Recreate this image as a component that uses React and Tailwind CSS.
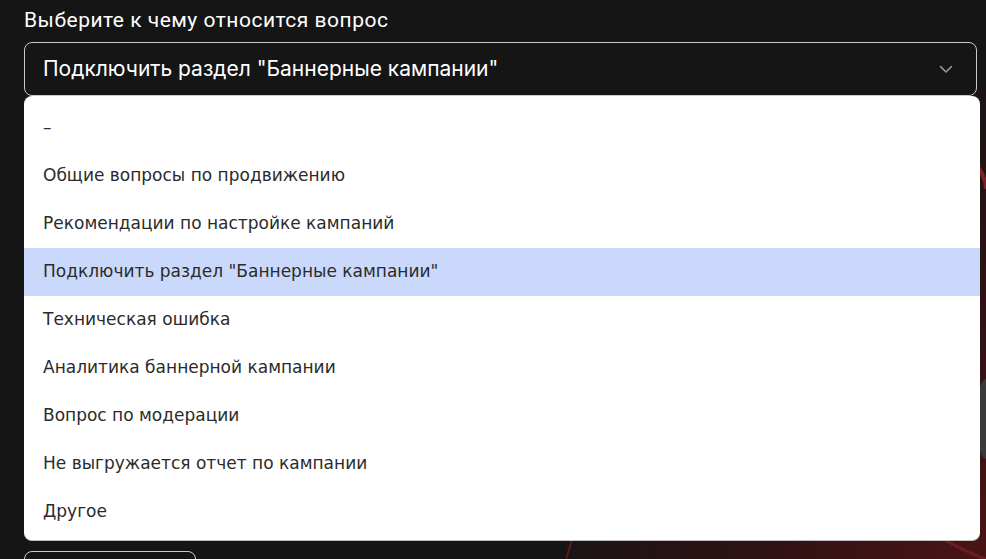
import React from "react";

const options = [
  "–",
  "Общие вопросы по продвижению",
  "Рекомендации по настройке кампаний",
  'Подключить раздел "Баннерные кампании"',
  "Техническая ошибка",
  "Аналитика баннерной кампании",
  "Вопрос по модерации",
  "Не выгружается отчет по кампании",
  "Другое",
];

export default function App() {
  const selected = 3;

  return (
    <div className="relative w-[986px] h-[559px] overflow-hidden bg-[#151515]">
      {/* background art behind the form */}
      <div className="absolute right-0 bottom-0 w-[420px] h-[470px] bg-[radial-gradient(ellipse_at_100%_100%,#4a1416_0%,#2a1214_45%,#151515_80%)]" />
      <svg
        className="absolute right-0 bottom-0"
        width="420"
        height="470"
        viewBox="0 0 420 470"
        fill="none"
      >
        <path d="M0 470 C 10 440 20 400 25 380" stroke="#5a1a1c" strokeWidth="2" />
        <path d="M330 420 C 360 440 390 460 420 470" stroke="#6b1e20" strokeWidth="3" />
        <path d="M405 70 C 415 80 420 90 420 100" stroke="#7a2224" strokeWidth="4" />
        <ellipse cx="420" cy="330" rx="10" ry="40" fill="#3a3a3a" />
      </svg>

      <div className="relative px-6 pt-[6px]">
        <div className="text-[21px] leading-[29px] tracking-[0.5px] text-white font-['Roboto',sans-serif]">
          Выберите к чему относится вопрос
        </div>

        <div className="mt-[7px] w-[953px]">
          <button className="flex h-[54px] w-full items-center justify-between rounded-lg border border-[#c9c9c9] bg-[#151515] pl-[18px] pr-[22px] text-left text-[21px] text-white font-['Inter',sans-serif]">
            <span>{options[selected]}</span>
            <svg width="16" height="16" viewBox="0 0 16 16" fill="none">
              <path
                d="M2.5 5.5 L8 11 L13.5 5.5"
                stroke="#9a9a9a"
                strokeWidth="1.6"
                strokeLinecap="round"
                strokeLinejoin="round"
              />
            </svg>
          </button>

          <ul className="w-[956px] rounded-lg border-b border-[#bdbdbd] bg-white pt-[8px] pb-[4px] font-['DejaVu_Sans',sans-serif]">
            {options.map((opt, i) => (
              <li
                key={opt}
                className={
                  "flex h-12 items-center px-[19px] text-[17px] text-[#2b2b2b] " +
                  (i === selected ? "bg-[#cad9fb]" : "")
                }
              >
                {opt}
              </li>
            ))}
          </ul>

          <div className="mt-[10px] h-[40px] w-[172px] rounded-lg border border-[#c9c9c9]" />
        </div>
      </div>
    </div>
  );
}
